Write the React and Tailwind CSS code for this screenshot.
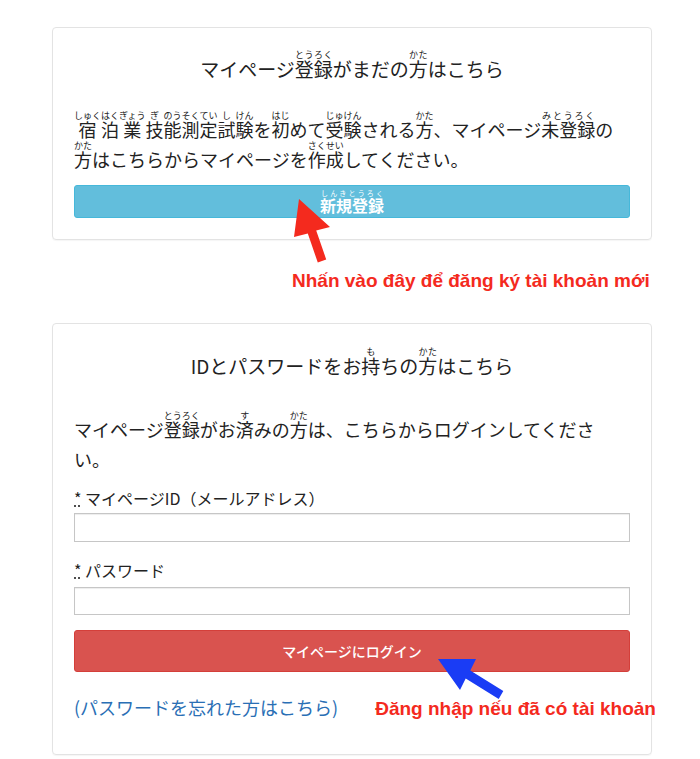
export default function App() {
  const jp = { fontFamily: '"Noto Sans CJK JP", "Noto Sans", sans-serif' };
  const vi = { fontFamily: '"Liberation Sans", Arial, sans-serif' };
  return (
    <div className="relative min-h-[759px] bg-white pt-[27px] text-[#222]" style={jp}>
      <div className="ml-[52px] w-[600px] rounded-[4px] border border-[#e3e3e3] px-[21px] pb-[21px] pt-[22px] shadow-[0_1px_1px_rgba(0,0,0,0.04)]">
        <h2 className="text-center text-[19px] leading-[34px]">
          マイページ<ruby>登録<rt className="text-[9px]">とうろく</rt></ruby>がまだの<ruby>方<rt className="text-[9px]">かた</rt></ruby>はこちら
        </h2>
        <p className="mt-[25px] text-[18px] leading-[30px]">
          <ruby>宿<rt className="text-[9px]">しゅく</rt></ruby>
          <ruby>泊<rt className="text-[9px]">はく</rt></ruby>
          <ruby>業<rt className="text-[9px]">ぎょう</rt></ruby>
          <ruby>技<rt className="text-[9px]">ぎ</rt></ruby>
          <ruby>能<rt className="text-[9px]">のう</rt></ruby>
          <ruby>測<rt className="text-[9px]">そく</rt></ruby>
          <ruby>定<rt className="text-[9px]">てい</rt></ruby>
          <ruby>試<rt className="text-[9px]">し</rt></ruby>
          <ruby>験<rt className="text-[9px]">けん</rt></ruby>を
          <ruby>初<rt className="text-[9px]">はじ</rt></ruby>めて
          <ruby>受験<rt className="text-[9px]">じゅけん</rt></ruby>される
          <ruby>方<rt className="text-[9px]">かた</rt></ruby>、マイページ
          <ruby>未登録<rt className="text-[9px]">みとうろく</rt></ruby>の
          <ruby>方<rt className="text-[9px]">かた</rt></ruby>はこちらからマイページを
          <ruby>作成<rt className="text-[9px]">さくせい</rt></ruby>してください。
        </p>
        <button className="mt-[11px] flex h-[33px] w-full items-center justify-center rounded-[3px] border border-[#46b8da] bg-[#62bedc] text-[16px] font-bold leading-[20px] text-white">
          <ruby>新規登録<rt className="text-[7px] font-normal leading-[8px]">しんきとうろく</rt></ruby>
        </button>
      </div>

      <div className="mt-[30px] whitespace-nowrap pl-[292px] text-[19px] font-bold leading-[22px] text-[#f42a1e]" style={vi}>
        Nhấn vào đây để đăng ký tài khoản mới
      </div>

      <div className="ml-[52px] mt-[31px] w-[600px] rounded-[4px] border border-[#e3e3e3] px-[21px] pb-[30px] pt-[23px] shadow-[0_1px_1px_rgba(0,0,0,0.04)]">
        <h2 className="text-center text-[19px] leading-[34px]">
          IDとパスワードをお<ruby>持<rt className="text-[9px]">も</rt></ruby>ちの<ruby>方<rt className="text-[9px]">かた</rt></ruby>はこちら
        </h2>
        <p className="mt-[28px] text-[18px] leading-[30px]">
          マイページ<ruby>登録<rt className="text-[9px]">とうろく</rt></ruby>がお<ruby>済<rt className="text-[9px]">す</rt></ruby>みの<ruby>方<rt className="text-[9px]">かた</rt></ruby>は、こちらからログインしてくださ
          <br />
          い。
        </p>
        <label className="mt-[12px] block text-[16px] leading-[24px]">
          <abbr title="required" className="cursor-help [text-decoration:underline_dotted]">*</abbr> マイページID（メールアドレス）
        </label>
        <input className="mt-[3px] block h-[29px] w-full border border-[#c6c6c6] bg-white shadow-[inset_0_1px_1px_rgba(0,0,0,0.075)]" />
        <label className="mt-[16px] block text-[16px] leading-[24px]">
          <abbr title="required" className="cursor-help [text-decoration:underline_dotted]">*</abbr> パスワード
        </label>
        <input type="password" className="mt-[5px] block h-[28px] w-full border border-[#c6c6c6] bg-white shadow-[inset_0_1px_1px_rgba(0,0,0,0.075)]" />
        <button className="mt-[15px] flex h-[42px] w-full items-center justify-center rounded-[3px] border border-[#d43f3a] bg-[#d9534f] text-[14px] font-medium text-white">
          マイページにログイン
        </button>
        <div className="mt-[22px] flex items-baseline whitespace-nowrap">
          <a href="#" className="shrink-0 text-[18px] text-[#2a6fb5]">(パスワードを忘れた方はこちら)</a>
          <span className="ml-[37px] shrink-0 text-[19px] font-bold text-[#f42a1e]" style={vi}>
            Đăng nhập nếu đã có tài khoản
          </span>
        </div>
      </div>

      <svg className="pointer-events-none absolute left-0 top-0" width="700" height="759">
        <polygon fill="#f42a1e" points="299,199 330,227 316.2,230.4 326.2,259.4 317.8,262.6 307.8,233.6 294,237" />
        <polygon fill="#1a3cf5" points="438,659 476,659 470.3,670.6 503.3,691.1 498.7,698.9 465.7,678.4 460,690" />
      </svg>
    </div>
  );
}
